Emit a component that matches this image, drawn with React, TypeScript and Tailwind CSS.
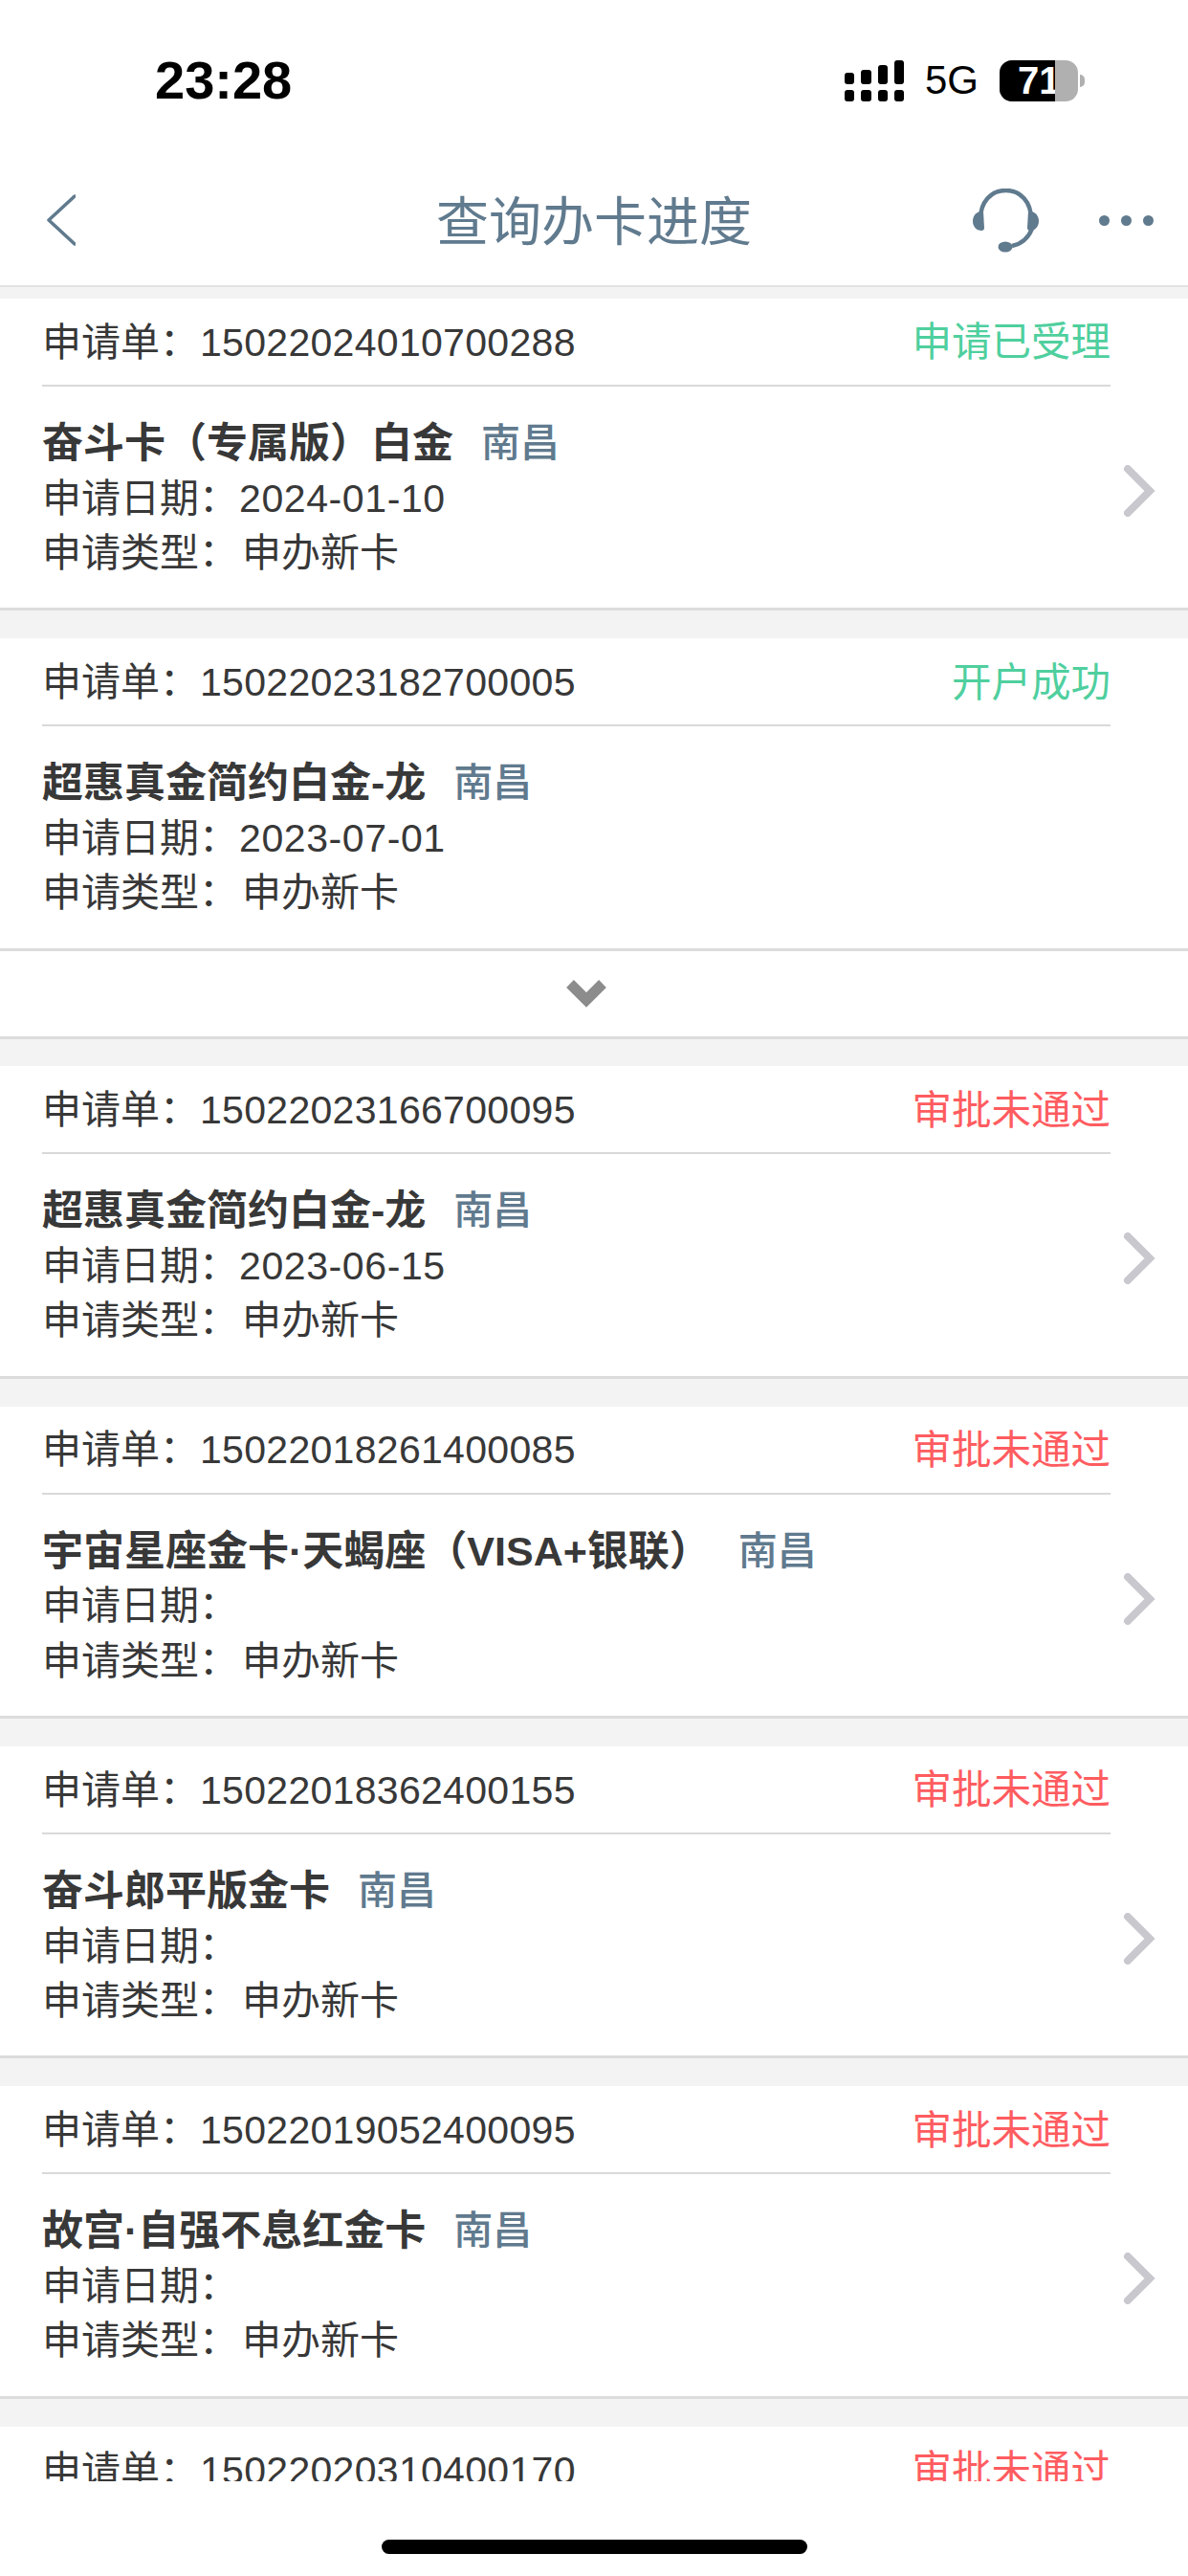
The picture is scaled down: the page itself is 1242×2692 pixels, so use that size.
import React from 'react';

interface Application {
  id: string;
  status: string;
  statusColor: string;
  name: string;
  date: string;
  arrow: boolean;
}

const GREEN = 'text-[#4fcf9e]';
const RED = 'text-[#ff5c60]';

const applications: Application[] = [
  { id: '15022024010700288', status: '申请已受理', statusColor: GREEN, name: '奋斗卡（专属版）白金', date: '2024-01-10', arrow: true },
  { id: '15022023182700005', status: '开户成功', statusColor: GREEN, name: '超惠真金简约白金-龙', date: '2023-07-01', arrow: false },
  { id: '15022023166700095', status: '审批未通过', statusColor: RED, name: '超惠真金简约白金-龙', date: '2023-06-15', arrow: true },
  { id: '15022018261400085', status: '审批未通过', statusColor: RED, name: '宇宙星座金卡·天蝎座（VISA+银联）', date: '', arrow: true },
  { id: '15022018362400155', status: '审批未通过', statusColor: RED, name: '奋斗郎平版金卡', date: '', arrow: true },
  { id: '15022019052400095', status: '审批未通过', statusColor: RED, name: '故宫·自强不息红金卡', date: '', arrow: true },
  { id: '15022020310400170', status: '审批未通过', statusColor: RED, name: '', date: '', arrow: true },
];

function SignalIcon() {
  return (
    <svg width="62" height="43" viewBox="0 0 62 43" fill="#000">
      <rect x="0" y="13" width="10" height="12" rx="3" />
      <rect x="17" y="10" width="11" height="15" rx="3" />
      <rect x="35" y="5" width="10" height="20" rx="3" />
      <rect x="52" y="0" width="10" height="25" rx="3" />
      <rect x="0" y="31" width="10" height="12" rx="3" />
      <rect x="17" y="31" width="11" height="12" rx="3" />
      <rect x="35" y="31" width="10" height="12" rx="3" />
      <rect x="52" y="31" width="10" height="12" rx="3" />
    </svg>
  );
}

function Battery() {
  return (
    <div className="flex items-center">
      <div className="w-[82px] h-[43px] rounded-[13px] bg-[#b0b0b0] overflow-hidden">
        <div className="w-[58px] h-full bg-black overflow-hidden">
          <div className="pl-[19px] text-[40px] leading-[43px] font-bold text-white whitespace-nowrap">71</div>
        </div>
      </div>
      <div className="ml-[2px] w-[5px] h-[13px] rounded-r-full bg-[#b0b0b0]" />
    </div>
  );
}

function HeadsetIcon() {
  return (
    <svg width="69" height="67" viewBox="0 0 69 67" fill="#607a8e">
      <path d="M8 32 C8 14 19 2 34.5 2 C50 2 61 14 61 32" fill="none" stroke="#607a8e" strokeWidth="4.5" />
      <path d="M8 24 C3 25 0 29 0 34 C0 40 4 44 9 44 C11 44 12 43 12 41 L11 24 Z" />
      <path d="M61 24 C66 25 69 29 69 34 C69 40 65 44 60 44 C58 44 57 43 57 41 L58 24 Z" />
      <path d="M62 42 C58 52 51 58 41 60" fill="none" stroke="#607a8e" strokeWidth="4.5" />
      <ellipse cx="34" cy="61" rx="7.5" ry="5.5" />
    </svg>
  );
}

function ApplicationCard({ app, last }: { app: Application; last: boolean }) {
  return (
    <div className={`h-[326.4px] bg-white border-b-[3px] border-[#dcdcdc] ${last ? 'mb-0' : 'mb-[29px]'}`}>
      <div className="ml-[44px] mr-[81px] h-[92px] pt-[3px] flex items-center justify-between border-b-2 border-[#d9d9d9] text-[41px]">
        <div className="text-[#383838] whitespace-nowrap">
          申请单：<span className="ml-[1px] tracking-[0.3px]">{app.id}</span>
        </div>
        <div className={`text-[41.5px] ${app.statusColor}`}>{app.status}</div>
      </div>
      <div className="flex items-start">
        <div className="flex-1 pl-[44px] pt-[31px] leading-[57.5px] text-[#383838] text-[41px]">
          <div className="flex items-center whitespace-pre">
            <span className="text-[43px] font-bold">{app.name}</span>
            <span className="ml-[29px] font-medium text-[#607a8e]">南昌</span>
          </div>
          <div>
            申请日期：<span className="ml-[1px] tracking-[0.6px]">{app.date}</span>
          </div>
          <div>
            申请类型：<span className="ml-[4px]">申办新卡</span>
          </div>
        </div>
        {app.arrow && (
          <svg className="mr-[34px] mt-[82px]" width="34" height="54" viewBox="0 0 34 54" fill="none" stroke="#c8c8ce" strokeWidth="8" strokeLinecap="round">
            <path d="M5 4 L28 27 L5 50" />
          </svg>
        )}
      </div>
    </div>
  );
}

export default function App() {
  return (
    <div className="w-[1242px] h-[2692px] bg-white flex flex-col overflow-hidden font-['Liberation_Sans','Noto_Sans_CJK_SC',sans-serif]">
      <div className="h-[168px] flex items-center pl-[162px] pr-[108px]">
        <div className="text-[56px] font-bold text-black">23:28</div>
        <div className="ml-auto flex items-center">
          <SignalIcon />
          <div className="ml-[22px] mr-[22px] text-[42px] leading-none text-black">5G</div>
          <Battery />
        </div>
      </div>

      <div className="h-[132px] shrink-0 grid grid-cols-[1fr_auto_1fr] items-center border-b-2 border-[#e2e2e2]">
        <div className="pl-[49px] mb-[6px]">
          <svg width="30" height="54" viewBox="0 0 30 54" fill="none" stroke="#607a8e" strokeWidth="3.5" strokeLinecap="round" strokeLinejoin="round">
            <path d="M29 2 L2 27 L29 52" />
          </svg>
        </div>
        <div className="text-[55px] text-[#607a8e] leading-none mb-[2px]">查询办卡进度</div>
        <div className="flex items-center justify-end pr-[36px] mb-[6px]">
          <HeadsetIcon />
          <div className="ml-[63px] flex gap-[12px]">
            <div className="w-[11px] h-[11px] rounded-full bg-[#607a8e]" />
            <div className="w-[11px] h-[11px] rounded-full bg-[#607a8e]" />
            <div className="w-[11px] h-[11px] rounded-full bg-[#607a8e]" />
          </div>
        </div>
      </div>

      <div className="h-[2293px] shrink-0 overflow-hidden bg-[#f3f3f3] pt-[12px]">
        {applications.map((app, i) => (
          <React.Fragment key={app.id}>
            <ApplicationCard app={app} last={i === 1} />
            {i === 1 && (
              <div className="h-[92px] mb-[28.5px] bg-white border-b-[3px] border-[#dcdcdc] flex items-center justify-center">
                <svg className="mr-[17px]" width="42" height="30" viewBox="0 0 42 30" fill="none" stroke="#8c8c8c" strokeWidth="11">
                  <path d="M4 5 L21 22 L38 5" />
                </svg>
              </div>
            )}
          </React.Fragment>
        ))}
      </div>

      <div className="flex-1 flex justify-center pt-[61px]">
        <div className="w-[445px] h-[15px] rounded-full bg-black" />
      </div>
    </div>
  );
}
